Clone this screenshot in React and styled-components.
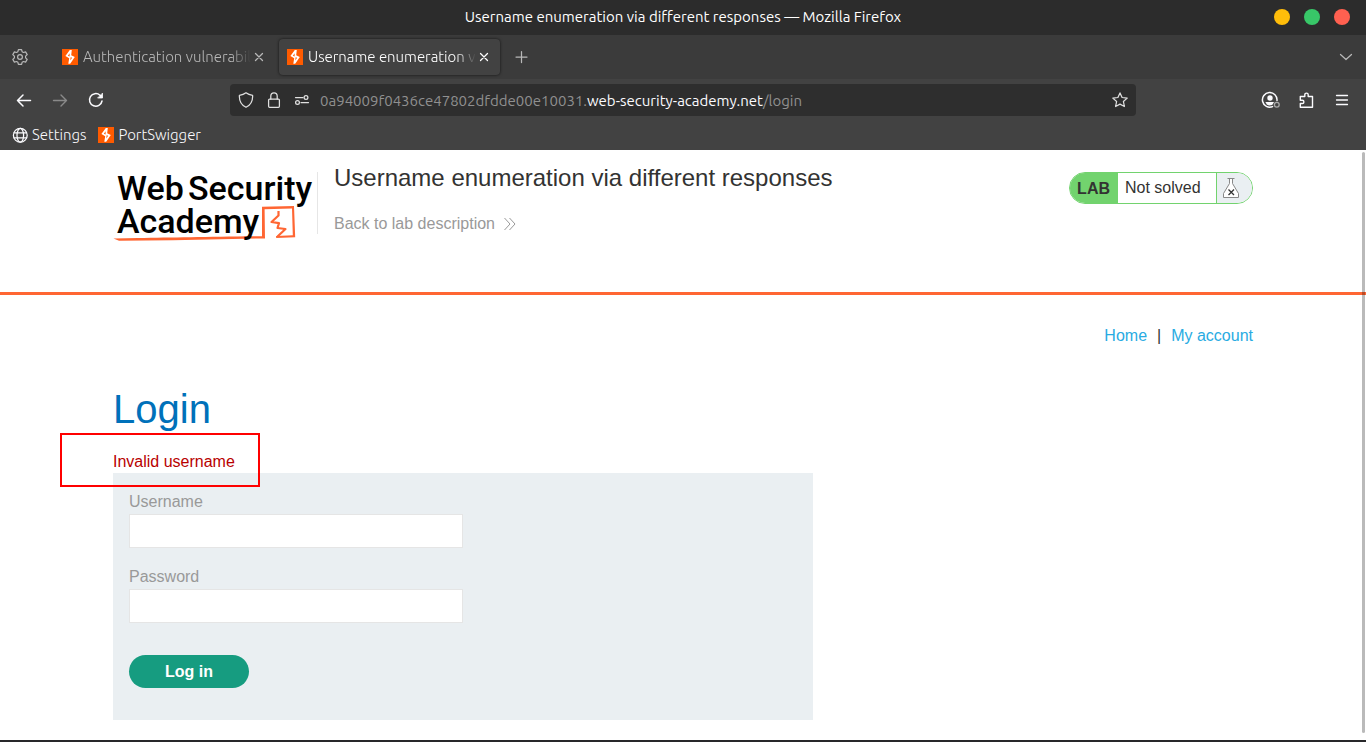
import React from "react";
import styled, { createGlobalStyle, css } from "styled-components";

const chromeFont = `Ubuntu, "Noto Sans", "Open Sans", sans-serif`;
const pageFont = `"Liberation Sans", Arial, sans-serif`;

const GlobalStyle = createGlobalStyle`
  *, *::before, *::after { box-sizing: border-box; }
  body { margin: 0; background: #fff; font-family: ${pageFont}; font-size: 16px; color: #333332; }
  h1, h2, p { margin: 0; font-weight: 400; }
  button, input { font: inherit; }
  a { text-decoration: none; }
`;

/* ---------- browser window ---------- */

const Window = styled.div`
  display: flex;
  flex-direction: column;
  min-height: 100vh;
  border-bottom: 2px solid #28282a;
`;

const TitleBar = styled.div`
  display: grid;
  grid-template-columns: 1fr auto 1fr;
  align-items: center;
  height: 35px;
  padding: 0 16px 2px;
  background: #2c2c2c;
  color: #fff;
  font: 400 15px/20px ${chromeFont};
`;

const WindowTitle = styled.span`
  grid-column: 2;
`;

const WindowControls = styled.div`
  display: flex;
  justify-content: flex-end;
  gap: 14px;
`;

const WindowButton = styled.button`
  width: 16px;
  height: 16px;
  padding: 0;
  border: 0;
  border-radius: 50%;
  background: ${(p) => p.$color};
`;

const TabBar = styled.div`
  display: flex;
  align-items: center;
  height: 44px;
  padding: 0 4px;
  background: #3b3b3b;
`;

const IconButton = styled.button`
  display: flex;
  align-items: center;
  justify-content: center;
  flex: none;
  width: 32px;
  height: 32px;
  padding: 0;
  border: 0;
  border-radius: 4px;
  background: none;
  color: ${(p) => p.$color || "#fbfbfe"};
`;

const Tabs = styled.div`
  display: flex;
  flex: 1;
  align-items: center;
  gap: 4px;
  margin-left: 18px;
`;

const Tab = styled.div`
  display: flex;
  align-items: center;
  width: 221px;
  height: 36px;
  padding: 0 8px;
  border-radius: 4px;
  color: #b8b8b8;
  ${(p) =>
    p.$active &&
    css`
      background: #424242;
      color: #fff;
      box-shadow: 0 0 3px rgba(0, 0, 0, 0.7);
    `}
`;

const TabLabel = styled.span`
  flex: 1;
  margin-left: 5px;
  overflow: hidden;
  white-space: nowrap;
  font: 300 15px/22px ${chromeFont};
  mask-image: linear-gradient(to left, transparent, #000 20px);
`;

const TabClose = styled(IconButton)`
  width: 16px;
  height: 16px;
  color: inherit;
`;

const NavBar = styled.div`
  display: flex;
  align-items: center;
  height: 42px;
  background: #424242;
`;

const NavGroup = styled.div`
  display: flex;
  flex: 0 0 230px;
  gap: 4px;
  padding: 0 8px;
  justify-content: ${(p) => (p.$end ? "flex-end" : "flex-start")};
`;

const AddressBar = styled.div`
  display: flex;
  flex: 1;
  align-items: center;
  min-width: 0;
  height: 32px;
  border-radius: 4px;
  background: #2e2e2e;
`;

const AddressButton = styled(IconButton)`
  width: ${(p) => (p.$narrow ? 24 : 32)}px;
`;

const Address = styled.div`
  flex: 1;
  overflow: hidden;
  white-space: nowrap;
  color: #909090;
  font: 400 15px/20px ${chromeFont};
  padding: 1px 0 0 2px;
`;

const Domain = styled.span`
  color: #fbfbfe;
`;

const Bookmarks = styled.nav`
  display: flex;
  align-items: center;
  gap: 12px;
  height: 29px;
  padding: 0 12px 2px;
  background: #424242;
`;

const Bookmark = styled.a`
  display: flex;
  align-items: center;
  gap: 4px;
  color: #fbfbfe;
  font: 300 15px/20px ${chromeFont};
`;

/* ---------- web page ---------- */

const Viewport = styled.main`
  position: relative;
  flex: 1;
  padding-bottom: 20px;
`;

const ScrollThumb = styled.div`
  position: absolute;
  top: 2px;
  right: 1px;
  bottom: 7px;
  width: 3px;
  border-radius: 2px;
  background: rgba(0, 0, 0, 0.27);
`;

const Container = styled.div`
  width: 100%;
  max-width: 1172px;
  margin: 0 auto;
  padding: 0 16px;
`;

const LabHeader = styled.header`
  padding: 22px 0 50px;
  border-bottom: 3px solid #ff6633;
`;

const HeaderRow = styled(Container)`
  display: flex;
  align-items: flex-start;
`;

const LogoLink = styled.a`
  display: block;
  height: 70px;
`;

const TitleBlock = styled.div`
  flex: 1;
  height: 62px;
  margin-left: 4px;
  padding-left: 16px;
  border-left: 1px solid #e6e6e6;
`;

const LabTitle = styled.h2`
  font-size: 24px;
  line-height: 28px;
  margin-top: -8px;
`;

const BackLink = styled.a`
  display: inline-flex;
  align-items: center;
  gap: 8px;
  margin-top: 22px;
  color: #999;
  line-height: 20px;
`;

const LabStatus = styled.div`
  display: flex;
  height: 32px;
  overflow: hidden;
  border: 1px solid #72d36e;
  border-radius: 16px;
  line-height: 30px;
`;

const LabTag = styled.strong`
  padding: 1px 8px 0 7px;
  background: #72d36e;
`;

const LabState = styled.span`
  width: 98px;
  padding-left: 7px;
`;

const LabFlask = styled.span`
  display: flex;
  align-items: center;
  width: 36px;
  padding-left: 6px;
  border-left: 1px solid #72d36e;
  background: #eaeff2;
`;

const PageNav = styled.nav`
  display: flex;
  justify-content: flex-end;
  gap: 10px;
  padding-top: 31px;
  line-height: 20px;
`;

const PageLink = styled.a`
  color: #29abe2;
`;

const Heading = styled.h1`
  margin-top: 39px;
  color: #0071ba;
  font-size: 40px;
  line-height: 48px;
`;

const ErrorMessage = styled.p`
  position: relative;
  padding-top: 18px;
  color: #b80000;
  line-height: 22px;
`;

const Highlight = styled.span`
  position: absolute;
  left: -53px;
  top: 0;
  width: 200px;
  height: 54px;
  border: 2px solid #ff0000;
  pointer-events: none;
`;

const LoginForm = styled.form`
  display: flex;
  flex-direction: column;
  align-items: flex-start;
  max-width: 700px;
  padding: 17px 16px 32px;
  background: #eaeff2;
`;

const FieldLabel = styled.label`
  color: #999;
  line-height: 24px;
`;

const Field = styled.input`
  width: 334px;
  max-width: 100%;
  height: 34px;
  margin-bottom: 17px;
  padding: 0 8px;
  border: 1px solid #e5e5e5;
  background: #fff;
`;

const SubmitButton = styled.button`
  width: 120px;
  height: 33px;
  margin-top: 15px;
  padding: 0;
  border: 0;
  border-radius: 17px;
  background: #169c80;
  color: #fff;
  font-weight: 700;
`;

/* ---------- drawings ---------- */

const Icon = ({ size = 16, children, ...rest }) => (
  <svg
    width={size}
    height={size}
    viewBox={`0 0 ${size} ${size}`}
    fill="none"
    stroke="currentColor"
    strokeWidth="1.25"
    strokeLinecap="round"
    strokeLinejoin="round"
    aria-hidden="true"
    {...rest}
  >
    {children}
  </svg>
);

const BoltFavicon = () => (
  <svg width="16" height="16" viewBox="0 0 16 16" aria-hidden="true">
    <path fill="#ff5b00" d="M0 0h16v16H0z" />
    <path fill="#fff" d="M7.800 1H9.800L9.200 6.200 12.800 8 8.200 14.700H6.300L7.200 9.300 3.400 7.100z" />
    <path fill="#ff5b00" d="M7.600 4.300 5.900 6.700 7.600 7.400zM8.600 8.200l1.500.6-1.800 2.700z" />
  </svg>
);

const GearIcon = () => (
  <Icon size={18} strokeWidth="1.2">
    <path d="M7.4 1.6h3.2l.5 2.1 1.4.8 2.1-.6 1.6 2.7-1.6 1.5v1.8l1.6 1.5-1.6 2.7-2.1-.6-1.4.8-.5 2.1H7.4l-.5-2.1-1.4-.8-2.1.6-1.6-2.7 1.6-1.5V8.100l-1.600-1.500 1.600-2.700 2.100.600 1.400-.800z" />
    <circle cx="9" cy="9" r="2.400" />
  </Icon>
);

const CloseIcon = () => (
  <Icon>
    <path d="m4.500 4.500 7 7m0-7-7 7" />
  </Icon>
);

const PlusIcon = () => (
  <Icon size={18}>
    <path d="M10.500 3.500v11M5 9h11" />
  </Icon>
);

const ChevronIcon = () => (
  <Icon>
    <path d="m2.500 5.500 5.500 5 5.500-5" />
  </Icon>
);

const BackIcon = () => (
  <Icon strokeWidth="1.500">
    <path d="M14.500 8.500h-13M7 3 1.500 8.500 7 14" />
  </Icon>
);

const ForwardIcon = () => (
  <Icon strokeWidth="1.400">
    <path d="M1.500 8.500h13M9 3l5.500 5.500L9 14" />
  </Icon>
);

const ReloadIcon = () => (
  <Icon strokeWidth="1.500">
    <path d="M14 9A6.300 6.300 0 1 1 12 3.200l1.500 1.500" />
    <path d="M14.500 1.500V6H10z" fill="currentColor" strokeWidth=".8" />
  </Icon>
);

const ShieldIcon = () => (
  <Icon>
    <path d="M8 .8c2 1.700 4 2.300 6.600 2.500.3 4.800-1.200 9.300-6.600 12C2.600 12.600 1.100 8.100 1.400 3.300 4 3.100 6 2.500 8 .8z" />
  </Icon>
);

const LockIcon = () => (
  <Icon>
    <rect x="2.600" y="7" width="10.800" height="8.300" rx="1" />
    <path d="M4.800 7V4a3.200 3.200 0 0 1 6.400 0v3" />
  </Icon>
);

const PermissionsIcon = () => (
  <Icon>
    <path d="M1.500 5.500h7.500M7 10.500h7.500" />
    <circle cx="12" cy="5.500" r="1.900" />
    <circle cx="3.500" cy="10.500" r="1.900" />
  </Icon>
);

const StarIcon = () => (
  <Icon>
    <path d="m8 .9 2.100 4.600 5.100.6-3.800 3.400 1 5L8 12.100l-4.400 2.400 1-5L.8 6.100l5.100-.6z" />
  </Icon>
);

const AccountIcon = () => (
  <Icon size={20} strokeWidth="1.500">
    <path d="M12.500 16.600A7.300 7.300 0 1 1 17 10.500" />
    <circle cx="10" cy="8" r="2.700" fill="currentColor" stroke="none" />
    <path d="M5.400 12h8.600l-1.400 2.500c-1.800 1.200-4 1.200-5.800 0z" fill="currentColor" stroke="none" />
    <circle cx="16.800" cy="14.800" r="2.400" stroke="#a8a8a8" strokeWidth="1.300" />
  </Icon>
);

const PuzzleIcon = () => (
  <Icon strokeWidth="1.400">
    <path d="M2.300 4.500H6.800V2.800a1.700 1.700 0 0 1 3.400 0v1.700h4.300v10.800H2.300v-3.800h2a1.600 1.600 0 0 0 0-3.200h-2z" />
  </Icon>
);

const MenuIcon = () => (
  <Icon strokeWidth="1.300">
    <path d="M2.500 3.500h11m-11 4.500h11m-11 4.500h11" />
  </Icon>
);

const GlobeIcon = () => (
  <Icon>
    <circle cx="8.300" cy="8.300" r="6.900" />
    <ellipse cx="8.300" cy="8.300" rx="3.300" ry="6.900" />
    <path d="M2 5.800h12.600M2 10.800h12.600" />
  </Icon>
);

const DoubleChevron = () => (
  <svg width="14" height="14" viewBox="0 0 14 14" fill="none" stroke="#999" aria-hidden="true">
    <path d="m1.500 1 5.500 6-5.500 6M6.500 1l5.500 6-5.500 6" />
  </svg>
);

const FlaskIcon = () => (
  <svg width="16" height="22" viewBox="0 0 16 22" fill="#fff" stroke="#888" aria-hidden="true">
    <path d="M4.500 1.500h7M6.500 1.500v5L.5 16.500v4h15v-4l-6-10v-5" />
    <path d="m5.500 12.500 5.500 5.500m0-5.500L5.500 18" stroke="#333" strokeWidth="1.300" />
  </svg>
);

const LogoSvg = styled.svg`
  display: block;
  overflow: visible;
  font: 500 34px Roboto, sans-serif;
`;

const AcademyLogo = () => (
  <LogoSvg width="200" height="72" viewBox="0 0 200 72" role="img" aria-label="Web Security Academy">
    <path
      fill="#ff6633"
      d="M.5 66.500 25 66c35-.5 70-1.200 124-1.800V34.800l32-.8 1.200 31.200-19 .8-.2-2 16.800-.8-.8-26.800-27.400.8.4 29.200L60 68.200 6 68.800z"
    />
    <path
      fill="none"
      stroke="#ff6633"
      strokeWidth="2.200"
      strokeLinejoin="round"
      d="M165.500 39v4.500l-7 6.500 7.500 1.200-1.500 4.800 8 1-8 7.500"
    />
    <text x="4" y="28" fill="#000">Web</text>
    <text x="75" y="28" fill="#000">Security</text>
    <text x="4" y="61" fill="#000">Academy</text>
  </LogoSvg>
);

export default function App() {
  return (
    <Window>
      <GlobalStyle />
      <TitleBar>
        <WindowTitle>Username enumeration via different responses — Mozilla Firefox</WindowTitle>
        <WindowControls>
          <WindowButton $color="#ffbd0a" aria-label="Minimize" />
          <WindowButton $color="#38c768" aria-label="Maximize" />
          <WindowButton $color="#ff6050" aria-label="Close window" />
        </WindowControls>
      </TitleBar>

      <TabBar>
        <IconButton $color="#b8b8b8" aria-label="Tab settings"><GearIcon /></IconButton>
        <Tabs>
          <Tab>
            <BoltFavicon />
            <TabLabel>Authentication vulnerabilities</TabLabel>
            <TabClose aria-label="Close tab"><CloseIcon /></TabClose>
          </Tab>
          <Tab $active>
            <BoltFavicon />
            <TabLabel>Username enumeration via different responses</TabLabel>
            <TabClose aria-label="Close tab"><CloseIcon /></TabClose>
          </Tab>
          <IconButton $color="#b8b8b8" aria-label="New tab"><PlusIcon /></IconButton>
        </Tabs>
        <IconButton $color="#b8b8b8" aria-label="List all tabs"><ChevronIcon /></IconButton>
      </TabBar>

      <NavBar>
        <NavGroup>
          <IconButton aria-label="Back"><BackIcon /></IconButton>
          <IconButton $color="#8a8a8a" aria-label="Forward"><ForwardIcon /></IconButton>
          <IconButton aria-label="Reload"><ReloadIcon /></IconButton>
        </NavGroup>
        <AddressBar>
          <AddressButton $color="#e0e0e0" aria-label="Tracking protection"><ShieldIcon /></AddressButton>
          <AddressButton $narrow $color="#e0e0e0" aria-label="Connection security"><LockIcon /></AddressButton>
          <AddressButton $color="#e0e0e0" aria-label="Permissions"><PermissionsIcon /></AddressButton>
          <Address role="textbox" aria-label="Address" contentEditable suppressContentEditableWarning spellCheck={false}>
            0a94009f0436ce47802dfdde00e10031.<Domain>web-security-academy.net</Domain>/login
          </Address>
          <AddressButton $color="#e0e0e0" aria-label="Bookmark this page"><StarIcon /></AddressButton>
        </AddressBar>
        <NavGroup $end>
          <IconButton aria-label="Account"><AccountIcon /></IconButton>
          <IconButton aria-label="Extensions"><PuzzleIcon /></IconButton>
          <IconButton aria-label="Menu"><MenuIcon /></IconButton>
        </NavGroup>
      </NavBar>

      <Bookmarks aria-label="Bookmarks">
        <Bookmark href="#settings"><GlobeIcon />Settings</Bookmark>
        <Bookmark href="#portswigger"><BoltFavicon />PortSwigger</Bookmark>
      </Bookmarks>

      <Viewport>
        <LabHeader>
          <HeaderRow>
            <LogoLink href="#academy"><AcademyLogo /></LogoLink>
            <TitleBlock>
              <LabTitle>Username enumeration via different responses</LabTitle>
              <BackLink href="#description">Back to lab description<DoubleChevron /></BackLink>
            </TitleBlock>
            <LabStatus>
              <LabTag>LAB</LabTag>
              <LabState>Not solved</LabState>
              <LabFlask><FlaskIcon /></LabFlask>
            </LabStatus>
          </HeaderRow>
        </LabHeader>

        <Container>
          <PageNav>
            <PageLink href="#home">Home</PageLink>
            <span>|</span>
            <PageLink href="#my-account">My account</PageLink>
          </PageNav>
          <Heading>Login</Heading>
          <ErrorMessage>
            Invalid username
            <Highlight />
          </ErrorMessage>
          <LoginForm onSubmit={(e) => e.preventDefault()}>
            <FieldLabel htmlFor="username">Username</FieldLabel>
            <Field id="username" type="text" />
            <FieldLabel htmlFor="password">Password</FieldLabel>
            <Field id="password" type="password" />
            <SubmitButton type="submit">Log in</SubmitButton>
          </LoginForm>
        </Container>
        <ScrollThumb />
      </Viewport>
    </Window>
  );
}
